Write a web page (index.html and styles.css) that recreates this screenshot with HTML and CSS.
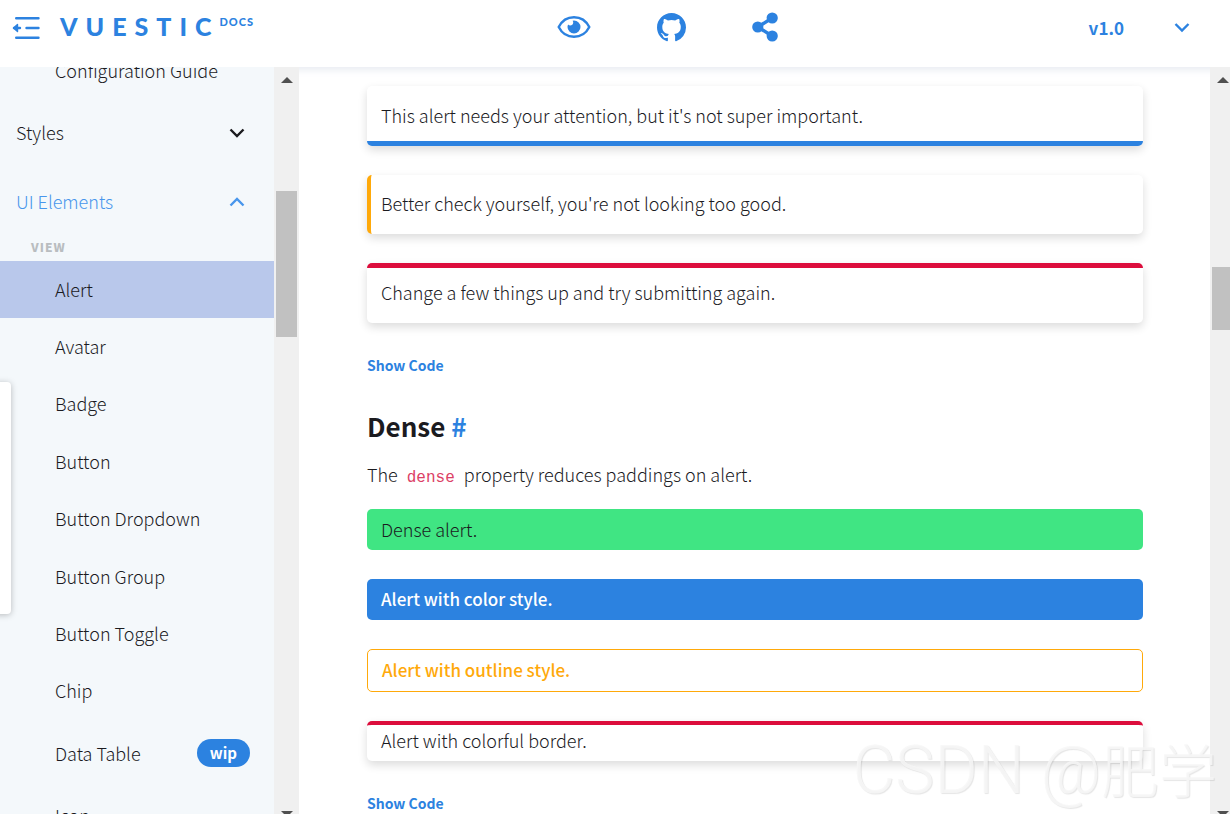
FILE: index.html
```html
<!DOCTYPE html>
<html lang="en">
<head>
<meta charset="utf-8">
<title>Vuestic Docs - Alert</title>
<link rel="stylesheet" href="styles.css">
</head>
<body>
<div class="app">
  <header class="header">
    <div class="header-left">
      <button class="icon-button" aria-label="Toggle sidebar">
        <svg width="28" height="24" viewBox="0 0 28 24" fill="none" stroke="currentColor" stroke-width="2.4" stroke-linecap="round" stroke-linejoin="round"><path d="M4.200 2.200H26.500M14.500 12H26.500M4.200 21.800H26.500M2 12H8"/><path d="M5.500 8.500L1.500 12L5.500 15.500Z" fill="currentColor" stroke-width="1.400"/></svg>
      </button>
      <a class="logo" href="#"><span class="logo-name">VUESTIC</span><span class="logo-docs">DOCS</span></a>
    </div>
    <nav class="header-links" aria-label="Resources">
      <a class="icon-link" href="#" aria-label="Preview">
        <svg width="34" height="24" viewBox="0 0 34 24" fill="none" stroke="currentColor" stroke-width="2.400"><path d="M1.700 12C5 5.500 10.500 2.200 17 2.200S29 5.500 32.300 12C29 18.500 23.500 21.800 17 21.800S5 18.500 1.700 12Z"/><path d="M17 5.500A6.500 6.500 0 1 1 10.500 12C10.500 11 10.700 10.200 11.100 9.500C12 10.600 14 10.800 15.300 9.700C16.500 8.600 16.500 6.700 15.600 5.700Z" fill="currentColor" stroke="none"/></svg>
      </a>
      <a class="icon-link" href="#" aria-label="GitHub">
        <svg width="29" height="29" viewBox="0 0 16 16" fill="currentColor"><path d="M8 0C3.580 0 0 3.580 0 8c0 3.540 2.290 6.530 5.470 7.590.4.070.55-.17.55-.38 0-.19-.01-.82-.01-1.490-2.010.37-2.530-.49-2.690-.94-.09-.23-.48-.94-.82-1.130-.28-.15-.68-.52-.01-.53.63-.01 1.080.58 1.230.82.72 1.210 1.870.87 2.330.66.070-.52.280-.87.510-1.070-1.780-.2-3.640-.89-3.640-3.950 0-.87.310-1.590.82-2.150-.08-.2-.36-1.020.08-2.120 0 0 .67-.21 2.200.82a7.600 7.600 0 0 1 4 0c1.530-1.040 2.200-.82 2.200-.82.44 1.100.16 1.920.08 2.120.51.56.82 1.270.82 2.150 0 3.070-1.870 3.750-3.650 3.950.29.25.54.73.54 1.480 0 1.070-.01 1.930-.01 2.200 0 .21.150.46.55.38A8.010 8.010 0 0 0 16 8c0-4.420-3.580-8-8-8z"/></svg>
      </a>
      <a class="icon-link" href="#" aria-label="Share">
        <svg width="26" height="30" viewBox="0 0 26 30" fill="currentColor"><path d="M20 6L6 15L20 24" fill="none" stroke="currentColor" stroke-width="3.400"/><circle cx="20.200" cy="6" r="5.600"/><circle cx="5.800" cy="15" r="5.600"/><circle cx="20.200" cy="24" r="5.600"/></svg>
      </a>
    </nav>
    <button class="version">
      <span>v1.0</span>
      <svg width="16" height="10" viewBox="0 0 16 10" fill="none" stroke="currentColor" stroke-width="2.400"><path d="M1.500 1L8 7.500L14.500 1"/></svg>
    </button>
  </header>

  <div class="body">
    <aside class="sidebar">
      <nav class="menu" aria-label="Documentation">
        <a class="menu-item" href="#">Configuration Guide</a>
        <button class="menu-group">
          <span>Styles</span>
          <svg width="16" height="10" viewBox="0 0 16 10" fill="none" stroke="currentColor" stroke-width="2.400"><path d="M1.500 1.500L8 8L14.500 1.500"/></svg>
        </button>
        <button class="menu-group menu-group-open">
          <span>UI Elements</span>
          <svg width="16" height="10" viewBox="0 0 16 10" fill="none" stroke="currentColor" stroke-width="2.400"><path d="M1.500 8.500L8 2L14.500 8.500"/></svg>
        </button>
        <div class="menu-caption">VIEW</div>
        <div class="menu-list">
          <a class="menu-item menu-item-active" href="#">Alert</a>
          <a class="menu-item" href="#">Avatar</a>
          <a class="menu-item" href="#">Badge</a>
          <a class="menu-item" href="#">Button</a>
          <a class="menu-item" href="#">Button Dropdown</a>
          <a class="menu-item" href="#">Button Group</a>
          <a class="menu-item" href="#">Button Toggle</a>
          <a class="menu-item" href="#">Chip</a>
        </div>
        <a class="menu-item menu-item-tagged" href="#">Data Table <span class="tag">wip</span></a>
        <a class="menu-item" href="#">Icon</a>
      </nav>
      <div class="side-tab"></div>
    </aside>
    <div class="scrollbar scrollbar-side">
      <span class="arrow-up"></span><span class="thumb"></span><span class="arrow-down"></span>
    </div>

    <main class="content">
      <div class="alert alert-border alert-bottom">This alert needs your attention, but it's not super important.</div>
      <div class="alert alert-border alert-left">Better check yourself, you're not looking too good.</div>
      <div class="alert alert-border alert-top">Change a few things up and try submitting again.</div>
      <button class="show-code">Show Code</button>
      <h2 class="title">Dense <a href="#">#</a></h2>
      <p class="text">The <code>dense</code> property reduces paddings on alert.</p>
      <div class="alert dense alert-success">Dense alert.</div>
      <div class="alert dense alert-color">Alert with color style.</div>
      <div class="alert dense alert-outline">Alert with outline style.</div>
      <div class="alert dense alert-border alert-top">Alert with colorful border.</div>
      <button class="show-code">Show Code</button>
    </main>
    <div class="scrollbar scrollbar-page">
      <span class="arrow-up"></span><span class="thumb"></span><span class="arrow-down"></span>
    </div>
  </div>
  <div class="watermark">CSDN @<span>肥学</span></div>
</div>
</body>
</html>
```
FILE: styles.css
```css
* {
  box-sizing: border-box;
}

body {
  margin: 0;
  background: #fff;
  color: #1b1b1f;
  font-family: "Noto Sans CJK SC", "Noto Sans", sans-serif;
  font-size: 18px;
  font-weight: 300;
  line-height: 24px;
}

a {
  color: inherit;
  text-decoration: none;
}

button {
  padding: 0;
  border: 0;
  background: none;
  color: inherit;
  font: inherit;
  cursor: pointer;
}

svg {
  display: block;
}

.app {
  position: relative;
  display: flex;
  flex-direction: column;
  height: 100vh;
  overflow: hidden;
}

/* Header */

.header {
  position: relative;
  z-index: 1;
  flex: none;
  display: grid;
  grid-template-columns: 1fr auto 1fr;
  align-items: start;
  height: 67px;
  padding: 12px 40px 0 12px;
  background: #fff;
  box-shadow: 0 2px 8px rgba(122, 139, 173, 0.2);
  color: #2c82e0;
}

.header-left {
  display: flex;
  align-items: flex-start;
  gap: 20px;
}

.icon-button {
  padding-top: 4px;
}

.logo {
  display: flex;
  font-family: Lato, sans-serif;
  font-weight: 900;
}

.logo-name {
  font-size: 25px;
  line-height: 28px;
  letter-spacing: 8px;
}

.logo-docs {
  font-size: 11px;
  line-height: 20px;
  letter-spacing: 1px;
}

.header-links {
  display: flex;
  align-items: center;
  gap: 66px;
  padding-left: 132px;
}

.version {
  display: flex;
  align-items: center;
  justify-self: end;
  gap: 50px;
  padding-top: 4px;
  font-size: 17px;
  font-weight: 700;
}

/* Layout */

.body {
  flex: 1;
  min-height: 0;
  display: flex;
}

.sidebar {
  position: relative;
  z-index: 2;
  flex: none;
  width: 274px;
  overflow: hidden;
  background: #f4f8fb;
}

.menu {
  display: flex;
  flex-direction: column;
  margin-top: -24px;
}

.menu-item {
  flex: none;
  display: flex;
  align-items: center;
  min-height: 55px;
  padding: 0 24px 2px 55px;
}

.menu-item-active {
  background: #b9c8eb;
}

.menu-item-tagged {
  justify-content: space-between;
  min-height: 68px;
}

.menu-list {
  display: grid;
  grid-template-rows: repeat(8, 1fr);
  min-height: 459px;
}

.menu-group {
  display: flex;
  align-items: center;
  justify-content: space-between;
  height: 69px;
  padding: 0 29px 0 16px;
}

.menu-group span {
  padding-bottom: 2px;
}

.menu-group-open {
  color: #4896ec;
}

.menu-caption {
  padding: 1px 31px 4px;
  color: #b9bdc0;
  font-size: 12px;
  font-weight: 900;
  line-height: 20px;
  letter-spacing: 1px;
}

.tag {
  padding: 0 13px;
  border-radius: 14px;
  background: #2c82e0;
  color: #fff;
  font-size: 15px;
  font-weight: 700;
  line-height: 28px;
}

.side-tab {
  position: absolute;
  top: 315px;
  left: -8px;
  width: 19px;
  height: 232px;
  border-radius: 4px;
  background: #fff;
  box-shadow: 0 1px 6px rgba(0, 0, 0, 0.25);
}

/* Scrollbars */

.scrollbar {
  position: relative;
  z-index: 2;
  flex: none;
  display: flex;
  flex-direction: column;
  align-items: center;
  width: 25px;
  padding-top: 10px;
  background: #f0f0f0;
}

.scrollbar-page {
  margin-right: -5px;
}

.arrow-up,
.arrow-down {
  border: 6px solid transparent;
}

.arrow-up {
  border-top: 0;
  border-bottom-color: #505050;
}

.arrow-down {
  margin: auto 0 -3px;
  border-bottom: 0;
  border-top-color: #505050;
}

.thumb {
  width: 21px;
  height: 146px;
  margin-top: 108px;
  background: #c1c1c1;
}

.scrollbar-page .thumb {
  height: 63px;
  margin-top: 184px;
}

/* Content */

.content {
  flex: 1;
  min-width: 0;
  display: flex;
  flex-direction: column;
  padding: 19px 67px 0 68px;
}

.alert {
  flex: none;
  margin-bottom: 29px;
  padding: 16px 14px 19px;
  border-radius: 5px;
}

.alert-border {
  background: #fff;
  box-shadow: 0 4px 10px rgba(0, 0, 0, 0.14);
}

.alert-bottom {
  padding-top: 17px;
  padding-bottom: 14px;
  border-bottom: 5px solid #2c82e0;
}

.alert-left {
  padding-left: 10px;
  border-left: 4px solid #ffa90a;
}

.alert-top {
  padding-top: 12px;
  border-top: 5px solid #dc0d3c;
}

.dense {
  padding: 8px 14px 9px;
}

.dense.alert-top {
  padding: 3px 14px 9px;
  border-top-width: 4px;
}

.alert-success {
  background: #40e583;
}

.alert-color {
  background: #2c82e0;
  color: #fff;
  font-size: 17px;
  font-weight: 500;
}

.alert-outline {
  border: 1px solid #ffa90a;
  color: #ffa90a;
  font-size: 17px;
  font-weight: 500;
}

.show-code {
  align-self: flex-start;
  margin-top: 1px;
  color: #2c82e0;
  font-size: 14px;
  font-weight: 700;
}

.title {
  margin: 33px 0 20px;
  font-size: 26px;
  font-weight: 700;
  line-height: 32px;
}

.title a {
  color: #2c82e0;
}

.text {
  margin: 0 0 19px;
}

.text code {
  padding: 0 5px;
  color: #dc3f66;
  font-family: "Liberation Mono", monospace;
  font-size: 16px;
}

.watermark {
  position: absolute;
  z-index: 3;
  right: 13px;
  bottom: 9px;
  color: rgba(247, 247, 247, 0.85);
  font-family: Roboto, sans-serif;
  font-size: 66px;
  font-weight: 300;
  line-height: 68px;
  text-shadow: 1px 1px 1px rgba(0, 0, 0, 0.1);
  pointer-events: none;
}

.watermark span {
  font-family: "Noto Sans CJK SC", sans-serif;
  font-size: 58px;
}
```
